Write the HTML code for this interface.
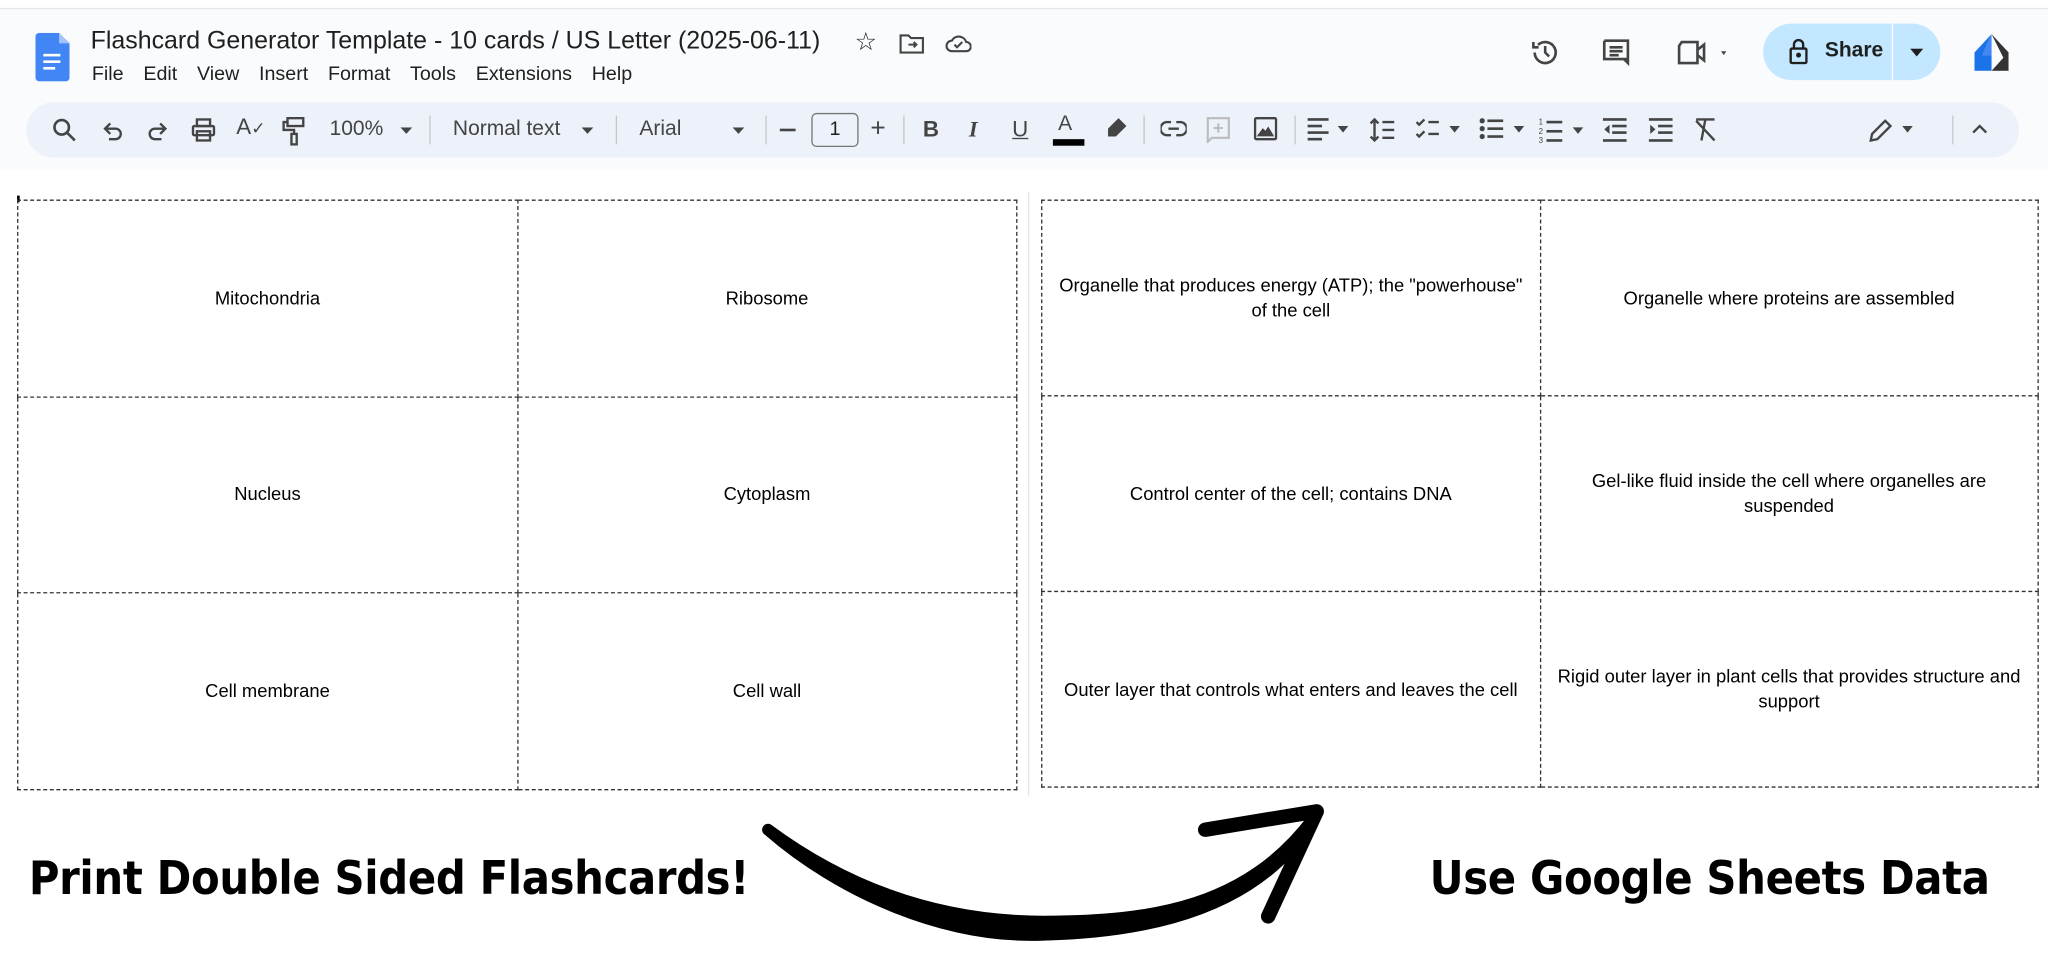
<!DOCTYPE html>
<html><head><meta charset="utf-8">
<style>
html,body{margin:0;padding:0;width:2048px;height:975px;overflow:hidden;background:#fff}
#w{position:absolute;left:0;top:0;width:1560px;height:743px;transform:scale(1.31282);transform-origin:0 0;font-family:"Liberation Sans",Arial,sans-serif;color:#1f1f1f}
.hdr{position:absolute;left:0;top:6px;width:1560px;height:122px;background:#f9fbfd;border-top:1px solid #e3e6ea}
.a{position:absolute;white-space:nowrap}
.menu span{margin-right:15px}
.tb{position:absolute;left:20px;top:78px;width:1518px;height:42px;background:#edf2fa;border-radius:21px}
.sep{position:absolute;top:10px;width:1px;height:22px;background:#c7c7c7}
.ic{position:absolute;top:11px}
.tbl{position:absolute;border-collapse:collapse;table-layout:fixed}
.tbl td{border:1px dashed #333;text-align:center;vertical-align:middle;font-size:14px;line-height:19px;padding:0 10px;color:#000}
.big{position:absolute;font-weight:bold;font-size:35px;color:#000;letter-spacing:-0.3px;font-family:"DejaVu Sans","Liberation Sans",sans-serif}
</style></head><body><div id="w">
<div class="hdr"></div>
<svg class="a" style="left:27px;top:25px" width="26" height="37" viewBox="0 0 26 37"><path d="M3 0h15l8 8v26a3 3 0 0 1-3 3H3a3 3 0 0 1-3-3V3a3 3 0 0 1 3-3z" fill="#4285f4"/><path d="M18 0l8 8h-8z" fill="#a1c2fa"/><rect x="6" y="16" width="13" height="2" fill="#fff"/><rect x="6" y="21" width="13" height="2" fill="#fff"/><rect x="6" y="26" width="9" height="2" fill="#fff"/></svg>
<div class="a" style="left:69px;top:21px;font-size:19px;color:#1f1f1f">Flashcard Generator Template - 10 cards / US Letter (2025-06-11)</div>
<div class="a" style="left:651px;top:21px;font-size:19px">☆</div>
<svg class="a" style="left:685px;top:25px" width="19" height="16" viewBox="0 0 19 16" fill="none" stroke="#444" stroke-width="1.6"><path d="M1 2h6l2 2h9v11H1z"/><path d="M7 9h6M11 7l2 2-2 2"/></svg>
<svg class="a" style="left:720px;top:25px" width="20" height="16" viewBox="0 0 20 16" fill="none" stroke="#444" stroke-width="1.6"><path d="M5 14a4 4 0 0 1 0-8 6 6 0 0 1 11 1 3.5 3.5 0 0 1 0 7z"/><path d="M7 9l2 2 4-4"/></svg>
<div class="a menu" style="left:70px;top:48px;font-size:15px"><span>File</span><span>Edit</span><span>View</span><span>Insert</span><span>Format</span><span>Tools</span><span>Extensions</span><span>Help</span></div>
<svg class="a" style="left:1165px;top:28px" width="24" height="24" viewBox="0 0 24 24" fill="none" stroke="#444" stroke-width="2"><path d="M4 12a8 8 0 1 0 2.5-5.8"/><path d="M3 4v4h4"/><path d="M12 7v5l3 3"/></svg>
<svg class="a" style="left:1219px;top:28px" width="24" height="24" viewBox="0 0 24 24" fill="none" stroke="#444" stroke-width="2"><path d="M3 3h18v14H7l4 0 0 0H21M3 3v14h15l3 3V3"/><path d="M7 8h10M7 11h10M7 14h7"/></svg>
<svg class="a" style="left:1277px;top:30px" width="40" height="20" viewBox="0 0 40 20" fill="none" stroke="#444" stroke-width="2"><path d="M4 2h12v16H2V5z"/><path d="M16 8l5-4v12l-5-4"/><path d="M34 9l4 0-2 3z" fill="#444" stroke="none"/></svg>
<div class="a" style="left:1343px;top:18px;width:135px;height:43px;background:#c2e7ff;border-radius:22px"></div>
<div class="a" style="left:1441px;top:18px;width:1px;height:43px;background:#f9fbfd"></div>
<svg class="a" style="left:1363px;top:29px" width="14" height="20" viewBox="0 0 14 20" fill="none" stroke="#1f1f1f" stroke-width="1.8"><rect x="1" y="8" width="12" height="11" rx="1"/><path d="M3.5 8V5a3.5 3.5 0 0 1 7 0v3"/><circle cx="7" cy="13" r="1" fill="#1f1f1f"/></svg>
<div class="a" style="left:1390px;top:30px;font-size:16px;font-weight:bold;color:#1f1f1f">Share</div>
<svg class="a" style="left:1455px;top:37px" width="10" height="6"><path d="M0 0h10L5 6z" fill="#1f1f1f"/></svg>
<svg class="a" style="left:1504px;top:26px" width="26" height="28" viewBox="0 0 26 28"><path d="M13 0L0 14v14h13V16H6z" fill="#1a73e8"/><path d="M13 0l13 14v14H13l9-10z" fill="#333"/><path d="M13 0L6 16h7z" fill="#4285f4"/></svg>
<div class="tb">
<svg class="ic" style="left:19px" width="20" height="20" viewBox="0 0 20 20" fill="none" stroke="#444" stroke-width="2"><circle cx="8" cy="8" r="5.5"/><path d="M12 12l6 6"/></svg>
<svg class="ic" style="left:57px" width="18" height="20" viewBox="0 0 18 20" fill="none" stroke="#444" stroke-width="1.8"><path d="M4 9h7a4 4 0 0 1 0 8H6"/><path d="M7 5L3 9l4 4"/></svg>
<svg class="ic" style="left:91px" width="18" height="20" viewBox="0 0 18 20" fill="none" stroke="#444" stroke-width="1.8"><path d="M14 9H7a4 4 0 0 0 0 8h5"/><path d="M11 5l4 4-4 4"/></svg>
<svg class="ic" style="left:125px" width="20" height="20" viewBox="0 0 20 20" fill="none" stroke="#444" stroke-width="1.8"><rect x="5" y="2" width="10" height="5"/><rect x="2" y="7" width="16" height="7" rx="1"/><rect x="5" y="11" width="10" height="7"/></svg>
<div class="ic a" style="left:160px;top:9px;font-size:17px;color:#444">A<span style="font-size:13px">✓</span></div>
<svg class="ic" style="left:195px" width="18" height="22" viewBox="0 0 18 22" fill="none" stroke="#444" stroke-width="1.8"><rect x="4" y="1" width="12" height="6"/><path d="M4 4H1v6h8v3"/><rect x="7" y="13" width="4" height="8"/></svg>
<div class="a" style="left:231px;top:12px;font-size:16px;color:#444">100%</div>
<svg class="a" style="left:285px;top:19px" width="9" height="5"><path d="M0 0h9L4.5 5z" fill="#444"/></svg>
<div class="sep" style="left:307px"></div>
<div class="a" style="left:325px;top:12px;font-size:16px;color:#444">Normal text</div>
<svg class="a" style="left:423px;top:19px" width="9" height="5"><path d="M0 0h9L4.5 5z" fill="#444"/></svg>
<div class="sep" style="left:449px"></div>
<div class="a" style="left:467px;top:12px;font-size:16px;color:#444">Arial</div>
<svg class="a" style="left:538px;top:19px" width="9" height="5"><path d="M0 0h9L4.5 5z" fill="#444"/></svg>
<div class="sep" style="left:563px"></div>
<div class="a" style="left:574px;top:20px;width:12px;height:2px;background:#444"></div>
<div class="a" style="left:598px;top:8px;width:34px;height:24px;border:1px solid #747775;border-radius:4px;text-align:center;line-height:24px;font-size:15px">1</div>
<div class="a" style="left:643px;top:9px;font-size:20px;color:#444">+</div>
<div class="sep" style="left:668px"></div>
<div class="a" style="left:683px;top:11px;font-size:17px;font-weight:bold;color:#444">B</div>
<div class="a" style="left:718px;top:11px;font-size:17px;font-style:italic;font-family:'Liberation Serif',serif;font-weight:bold;color:#444">I</div>
<div class="a" style="left:751px;top:11px;font-size:17px;text-decoration:underline;color:#444">U</div>
<div class="a" style="left:786px;top:8px;font-size:16px;color:#444">A</div>
<div class="a" style="left:782px;top:28px;width:24px;height:5px;background:#000"></div>
<svg class="ic" style="left:821px" width="18" height="18" viewBox="0 0 18 18"><path d="M11 1l6 6-8 8H3v-6z" fill="#444"/></svg>
<div class="sep" style="left:851px"></div>
<svg class="ic" style="left:864px;top:14px" width="20" height="12" viewBox="0 0 20 12" fill="none" stroke="#444" stroke-width="1.8"><path d="M8 1H5a5 5 0 0 0 0 10h3M12 1h3a5 5 0 0 1 0 10h-3M6 6h8"/></svg>
<svg class="ic" style="left:899px" width="18" height="20" viewBox="0 0 18 20" fill="none" stroke="#bbb" stroke-width="1.6"><path d="M1 1h16v15H4l-3 3z"/><path d="M9 5v7M5.5 8.5h7"/></svg>
<svg class="ic" style="left:935px" width="18" height="18" viewBox="0 0 18 18" fill="none" stroke="#444" stroke-width="1.8"><rect x="1" y="1" width="16" height="16" rx="1"/><path d="M4 14l3-4 2 2 2-3 3 5z" fill="#444"/></svg>
<div class="sep" style="left:966px"></div>
<svg class="ic" style="left:976px" width="34" height="18" viewBox="0 0 34 18"><g fill="#444"><rect x="0" y="1" width="16" height="2"/><rect x="0" y="6" width="11" height="2"/><rect x="0" y="11" width="16" height="2"/><rect x="0" y="16" width="11" height="2"/><path d="M23 7h8l-4 5z"/></g></svg>
<svg class="ic" style="left:1023px" width="20" height="20" viewBox="0 0 20 20" fill="none" stroke="#444" stroke-width="1.8"><path d="M4 2v16M1 5l3-3 3 3M1 15l3 3 3-3M10 4h9M10 10h9M10 16h9"/></svg>
<svg class="ic" style="left:1058px" width="36" height="18" viewBox="0 0 36 18" fill="none" stroke="#444" stroke-width="1.8"><path d="M1 4l2 2 4-4M1 13l2 2 4-4M10 4h8M10 13h8"/><path d="M26 7h8l-4 5z" fill="#444" stroke="none"/></svg>
<svg class="ic" style="left:1107px" width="36" height="18" viewBox="0 0 36 18"><g fill="#444"><circle cx="2" cy="3" r="2"/><circle cx="2" cy="9" r="2"/><circle cx="2" cy="15" r="2"/><rect x="6" y="2" width="12" height="2"/><rect x="6" y="8" width="12" height="2"/><rect x="6" y="14" width="12" height="2"/><path d="M26 7h8l-4 5z"/></g></svg>
<svg class="ic" style="left:1152px" width="36" height="20" viewBox="0 0 36 20"><g fill="#444"><text x="0" y="6" font-size="6" font-family="Liberation Sans">1</text><text x="0" y="13" font-size="6" font-family="Liberation Sans">2</text><text x="0" y="20" font-size="6" font-family="Liberation Sans">3</text><rect x="6" y="3" width="12" height="2"/><rect x="6" y="10" width="12" height="2"/><rect x="6" y="17" width="12" height="2"/><path d="M26 8h8l-4 5z"/></g></svg>
<svg class="ic" style="left:1200px" width="20" height="20" viewBox="0 0 20 20"><g fill="#444"><rect x="1" y="1" width="18" height="2"/><rect x="8" y="6" width="11" height="2"/><rect x="8" y="11" width="11" height="2"/><rect x="1" y="17" width="18" height="2"/><path d="M6 6v7l-4-3.5z"/></g></svg>
<svg class="ic" style="left:1235px" width="20" height="20" viewBox="0 0 20 20"><g fill="#444"><rect x="1" y="1" width="18" height="2"/><rect x="8" y="6" width="11" height="2"/><rect x="8" y="11" width="11" height="2"/><rect x="1" y="17" width="18" height="2"/><path d="M2 6v7l4-3.5z"/></g></svg>
<svg class="ic" style="left:1269px" width="20" height="20" viewBox="0 0 20 20" fill="none" stroke="#444" stroke-width="1.8"><path d="M3 2h14M10 2l-3 16M3 3l14 15"/></svg>
<svg class="ic" style="left:1403px" width="36" height="20" viewBox="0 0 36 20"><path d="M2 18l1-5 10-10 4 4-10 10z" fill="none" stroke="#444" stroke-width="1.8"/><path d="M26 7h8l-4 5z" fill="#444"/></svg>
<div class="sep" style="left:1467px"></div>
<svg class="ic" style="left:1482px;top:16px" width="12" height="8" viewBox="0 0 12 8" fill="none" stroke="#444" stroke-width="1.8"><path d="M1 7l5-5 5 5"/></svg>
</div>
<div class="a" style="left:783px;top:146px;width:1px;height:460px;background:#e1e3e6"></div>
<div class="a" style="left:13px;top:149px;width:2px;height:5px;background:#000"></div>
<table class="tbl" style="left:13px;top:152px;width:762px;height:450px">
<tr><td>Mitochondria</td><td>Ribosome</td></tr>
<tr><td>Nucleus</td><td>Cytoplasm</td></tr>
<tr><td>Cell membrane</td><td>Cell wall</td></tr>
</table>
<table class="tbl" style="left:793px;top:152px;width:760px;height:448px">
<tr><td>Organelle that produces energy (ATP); the "powerhouse" of the cell</td><td>Organelle where proteins are assembled</td></tr>
<tr><td>Control center of the cell; contains DNA</td><td>Gel-like fluid inside the cell where organelles are suspended</td></tr>
<tr><td>Outer layer that controls what enters and leaves the cell</td><td>Rigid outer layer in plant cells that provides structure and support</td></tr>
</table>
<div class="big" style="left:22px;top:650px;transform:scaleX(0.91);transform-origin:0 0">Print Double Sided Flashcards!</div>
<div class="big" style="left:1089px;top:650px;transform:scaleX(0.91);transform-origin:0 0">Use Google Sheets Data</div>
<svg class="a" style="left:570px;top:605px" width="450" height="120" viewBox="570 605 450 120">
<path d="M585 632 C640 680 720 715 795 712 C880 710 960 690 1000 624 C950 690 880 702 795 702 C720 702 650 680 585 632 Z" fill="#000" stroke="#000" stroke-width="9" stroke-linejoin="round"/>
<path d="M918 632 L1003 618 L966 698" fill="none" stroke="#000" stroke-width="11" stroke-linecap="round" stroke-linejoin="round"/>
</svg>
</div></body></html>
